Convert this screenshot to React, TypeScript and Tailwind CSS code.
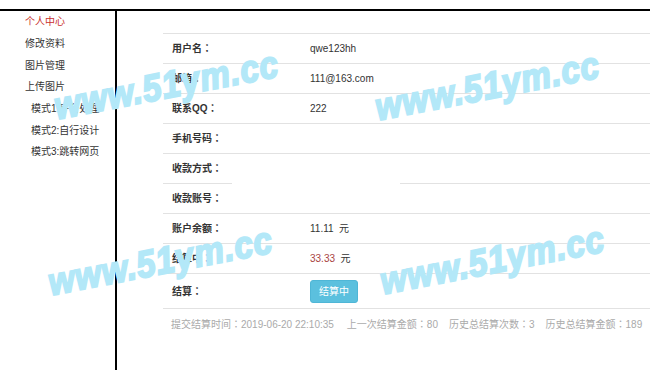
import React from "react";

const sideItems = [
  { label: "个人中心", active: true, sub: false },
  { label: "修改资料", active: false, sub: false },
  { label: "图片管理", active: false, sub: false },
  { label: "上传图片", active: false, sub: false },
  { label: "模式1:平台处理", active: false, sub: true },
  { label: "模式2:自行设计", active: false, sub: true },
  { label: "模式3:跳转网页", active: false, sub: true },
];

// centred full-width colon, as the original font draws it
const C = () => <span className="font-['Noto_Sans_CJK_JP',sans-serif]">：</span>;

const rows: { label: string; value?: React.ReactNode }[] = [
  { label: "用户名", value: "qwe123hh" },
  { label: "邮箱", value: "111@163.com" },
  { label: "联系QQ", value: "222" },
  { label: "手机号码" },
  { label: "收款方式" },
  { label: "收款账号" },
  { label: "账户余额", value: <span>11.11&nbsp; 元</span> },
  {
    label: "结算中",
    value: (
      <span>
        <span className="text-[#a94442]">33.33</span>&nbsp; 元
      </span>
    ),
  },
];

function Watermark({ className }: { className: string }) {
  return (
    <div
      className={`absolute whitespace-nowrap font-['Liberation_Sans',sans-serif] text-[38px] leading-[38px] font-bold italic tracking-[1px] text-[#b3e8f8] [-webkit-text-stroke:2px_#b3e8f8] -rotate-[11deg] scale-x-[0.88] pointer-events-none ${className}`}
    >
      www.51ym.cc
    </div>
  );
}

export default function App() {
  return (
    <div className="relative w-[650px] h-[370px] overflow-hidden bg-white pt-[9px] font-['Liberation_Sans','Noto_Sans_CJK_SC',sans-serif] text-[10px] text-[#333]">
      <div className="flex h-[361px] border-t-2 border-black">
        <div className="w-[117px] shrink-0 border-r-2 border-black">
          {sideItems.map((it) => (
            <div
              key={it.label}
              className={`h-[21.7px] flex items-center ${it.sub ? "pl-[31px]" : "pl-[25px]"} ${it.active ? "text-[#c9302c]" : "text-[#333]"}`}
            >
              {it.label}
            </div>
          ))}
        </div>
        <div className="flex-1 pl-[46px] pt-[22px]">
          {rows.map((r) => (
            <div key={r.label} className="h-[30px] flex items-center border-t border-[#e2e2e2] pb-[1px]">
              <div className="w-[147px] pl-[9px] font-bold">
                {r.label}
                <C />
              </div>
              <div>{r.value}</div>
            </div>
          ))}
          <div className="h-[36px] flex items-center border-y border-[#e2e2e2]">
            <div className="w-[147px] pl-[9px] font-bold">
              结算<C />
            </div>
            <button className="w-[48px] h-[23px] rounded-[3px] bg-[#5bc0de] border border-[#4fb6d6] text-white text-[10px] flex items-center justify-center">
              结算中
            </button>
          </div>
          <div className="pl-[8px] mt-[7px] text-[#aaa] whitespace-nowrap flex">
            <span>提交结算时间<C />2019-06-20 22:10:35</span>
            <span className="ml-[13px]">上一次结算金额<C />80</span>
            <span className="ml-[11px]">历史总结算次数<C />3</span>
            <span className="ml-[11px]">历史总结算金额<C />189</span>
          </div>
        </div>
      </div>

      <div className="absolute left-[232px] top-[160px] w-[168px] h-[48px] bg-white" />

      <Watermark className="left-[37px] top-[66px]" />
      <Watermark className="left-[358px] top-[67px]" />
      <Watermark className="left-[31px] top-[242px]" />
      <Watermark className="left-[363px] top-[241px]" />
    </div>
  );
}
